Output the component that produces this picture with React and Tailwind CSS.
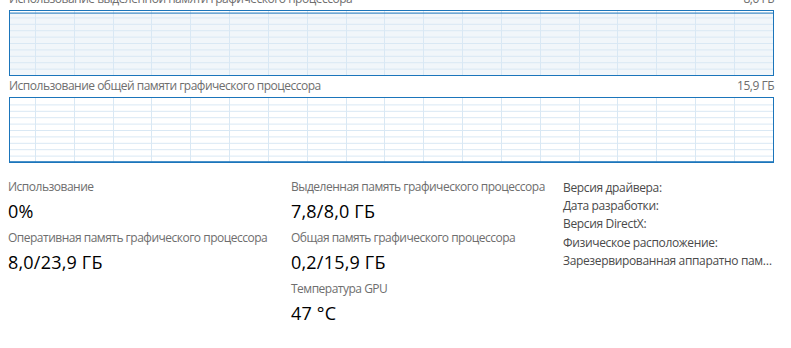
import React from 'react';

const FONT = { fontFamily: '"Segoe UI", "Open Sans", "Noto Sans", sans-serif' };

const GRID_X = Array.from({ length: 19 }, (_, i) => 25 + i * 38.83);
const GRID_Y = Array.from({ length: 9 }, (_, i) => (i + 1) * 6.4);

const Graph = ({ usage }) => {
  const lineY = 64 - 64 * usage;
  return (
    <div className="h-[66px] border border-[#1b75bb] bg-white">
      <svg className="block w-full h-full" preserveAspectRatio="none">
        <rect x="0" y={lineY} width="100%" height={64 - lineY} fill="#f1f6fa" />
        {GRID_Y.map(y => (
          <line key={'h' + y} x1="0" x2="100%" y1={y + 0.5} y2={y + 0.5} stroke="#d9e8f4" strokeWidth="1" />
        ))}
        {GRID_X.map(x => (
          <line key={'v' + x} x1={Math.round(x) + 0.5} x2={Math.round(x) + 0.5} y1="0" y2="64" stroke="#d9e8f4" strokeWidth="1" />
        ))}
        <line x1="0" x2="100%" y1={lineY + 0.5} y2={lineY + 0.5} stroke="#1b75bb" strokeWidth="1" />
      </svg>
    </div>
  );
};

const GraphHeader = ({ title, total }) => (
  <div className="h-[21px] pt-[2px] flex justify-between text-[12px] leading-[16px] tracking-[-0.5px] text-[#6e6e6e]">
    <span>{title}</span>
    <span>{total}</span>
  </div>
);

const Stat = ({ label, value }) => (
  <div>
    <div className="text-[12px] leading-[16px] tracking-[-0.5px] text-[#6e6e6e] whitespace-nowrap">{label}</div>
    <div className="mt-[4px] text-[18px] leading-[24px] tracking-[0.2px] text-black whitespace-nowrap">{value}</div>
  </div>
);

export default function App() {
  return (
    <div className="w-[791px] h-[348px] overflow-hidden bg-white" style={FONT}>
      <div className="-mt-[11px] pl-[9px] pr-[17px]">
        <GraphHeader title="Использование выделенной памяти графического процессора" total="8,0 ГБ" />
        <Graph usage={0.975} />
        <GraphHeader title="Использование общей памяти графического процессора" total="15,9 ГБ" />
        <Graph usage={0.012} />
      </div>
      <div className="mt-[16px] pl-[8px] flex">
        <div className="w-[283px] flex flex-col gap-[7px]">
          <Stat label="Использование" value="0%" />
          <Stat label="Оперативная память графического процессора" value="8,0/23,9 ГБ" />
        </div>
        <div className="w-[272px] flex flex-col gap-[7px]">
          <Stat label="Выделенная память графического процессора" value="7,8/8,0 ГБ" />
          <Stat label="Общая память графического процессора" value="0,2/15,9 ГБ" />
          <Stat label="Температура GPU" value="47 °C" />
        </div>
        <div className="w-[215px] text-[12px] leading-[18.2px] tracking-[-0.35px] text-[#4a4a4a]">
          <div>Версия драйвера:</div>
          <div>Дата разработки:</div>
          <div>Версия DirectX:</div>
          <div>Физическое расположение:</div>
          <div className="truncate">Зарезервированная аппаратно память:</div>
        </div>
      </div>
    </div>
  );
}
